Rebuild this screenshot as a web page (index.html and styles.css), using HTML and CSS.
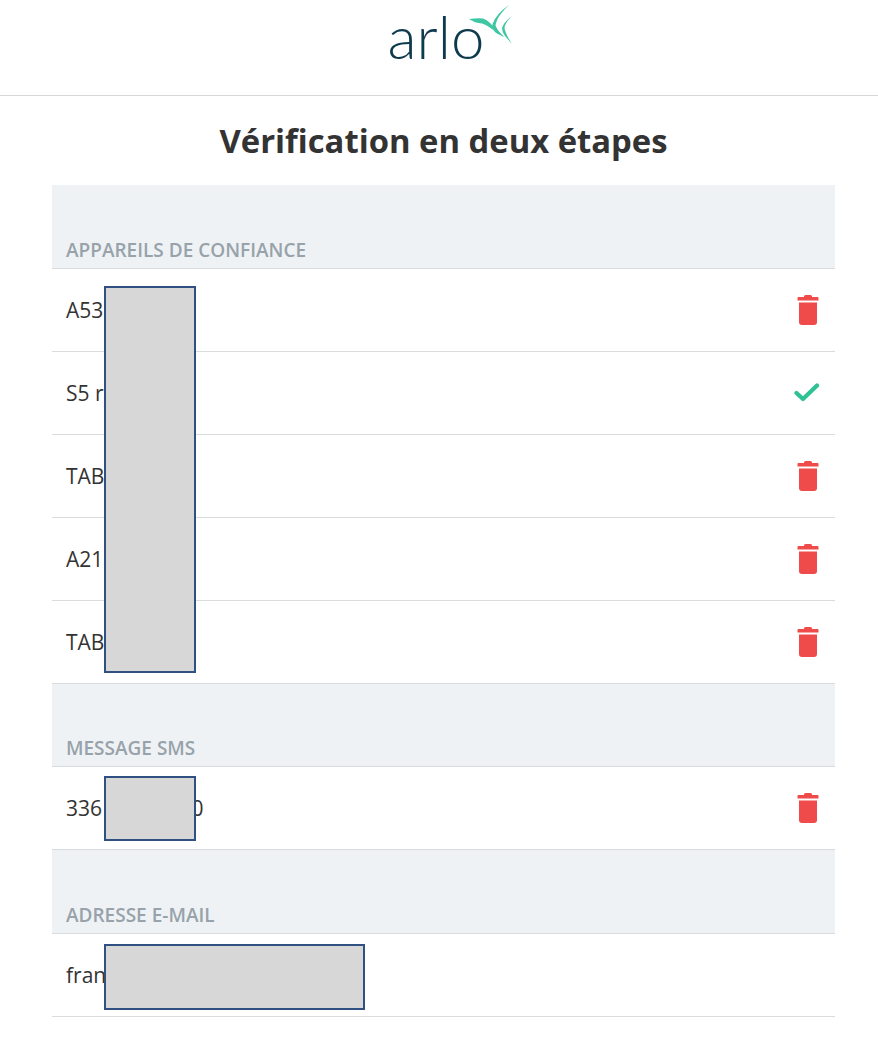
FILE: index.html
```html
<!DOCTYPE html>
<html lang="fr">
<head>
    <meta charset="UTF-8">
    <meta name="viewport" content="width=device-width, initial-scale=1.0">
    <title>Vérification en deux étapes</title>
    <link rel="stylesheet" href="styles.css">
</head>
<body>

    <header class="top-bar">
        <div class="logo">
            <span class="logo-text">arlo</span>
            <svg class="logo-bird" viewBox="468 4 46 42" width="46" height="42">
                <g fill="#3fc7a3">
                    <path d="M469 19 Q477 18 483 18.5 Q487 19.5 490 23 L504 37 L489 27 Q486 24.5 482 23.5 Q475 23 469 19 Z"/>
                    <path d="M509 5 Q496 14 492.5 24 Q491.5 30 497 33.5 L504 37 Q496 29 495.5 25 Q497 16 509 5 Z"/>
                    <path d="M512 16 Q504 22 502 28 Q502 32 505 36 L512 44 Q505 33 504.5 28 Q505 23 512 16 Z"/>
                </g>
            </svg>
        </div>
    </header>

    <h1 class="page-title">Vérification en deux étapes</h1>

    <main class="settings">
        <h2 class="section-head section-head-tall">APPAREILS DE CONFIANCE</h2>
        <div class="row">
            <span>A53</span>
            <svg class="trash" viewBox="0 0 22 32" width="22" height="32"><use href="#icon-trash"/></svg>
        </div>
        <div class="row">
            <span>S5 r</span>
            <svg class="check" viewBox="0 0 26 20" width="26" height="20"><path d="M2.5 11 L9 17 L23 3.5" fill="none" stroke="#2fc295" stroke-width="4.2" stroke-linecap="round" stroke-linejoin="round"/></svg>
        </div>
        <div class="row">
            <span>TAB</span>
            <svg class="trash" viewBox="0 0 22 32" width="22" height="32"><use href="#icon-trash"/></svg>
        </div>
        <div class="row">
            <span>A21</span>
            <svg class="trash" viewBox="0 0 22 32" width="22" height="32"><use href="#icon-trash"/></svg>
        </div>
        <div class="row">
            <span>TAB</span>
            <svg class="trash" viewBox="0 0 22 32" width="22" height="32"><use href="#icon-trash"/></svg>
        </div>

        <h2 class="section-head">MESSAGE SMS</h2>
        <div class="row">
            <span>336 00000000</span>
            <svg class="trash" viewBox="0 0 22 32" width="22" height="32"><use href="#icon-trash"/></svg>
        </div>

        <h2 class="section-head section-head-tall">ADRESSE E-MAIL</h2>
        <div class="row">
            <span>fran</span>
        </div>

        <!-- masques par-dessus les données -->
        <div class="mask mask-devices"></div>
        <div class="mask mask-sms"></div>
        <div class="mask mask-mail"></div>
    </main>

    <svg class="icon-defs" width="0" height="0">
        <symbol id="icon-trash" viewBox="0 0 22 32">
            <path d="M7 2.5 Q7 1 8.5 1 H13.5 Q15 1 15 2.5 V3 H20.5 Q21.5 3 21.5 4 V6.5 H0.5 V4 Q0.5 3 1.5 3 H7 Z" fill="#ef4b4b"/>
            <path d="M2 8.5 H20 V28 Q20 31 17 31 H5 Q2 31 2 28 Z" fill="#ef4b4b"/>
        </symbol>
    </svg>

</body>
</html>
```

FILE: styles.css
```css
body {
    margin: 0;
    background-color: #fff;
    font-family: "Open Sans", sans-serif;
    color: #333;
}

.top-bar {
    height: 95px;
    border-bottom: 1px solid #d5d7d9;
    display: flex;
    justify-content: center;
}

.logo {
    position: relative;
    width: 124px;
    height: 70px;
    margin-left: 25px;
}

.logo-text {
    position: absolute;
    left: -2px;
    top: 0;
    font-family: "Lato", sans-serif;
    font-weight: 300;
    font-size: 60px;
    line-height: 72px;
    color: #0e3a4e;
}

.logo-bird {
    position: absolute;
    left: 78px;
    top: 4px;
}

.page-title {
    margin: 0 43px 0 52px;
    height: 89px;
    line-height: 90px;
    text-align: center;
    font-size: 32.8px;
    font-weight: 700;
    color: #333;
}

.settings {
    position: relative;
    margin: 0 43px 0 52px;
}

.section-head {
    margin: 0;
    height: 83px;
    box-sizing: border-box;
    padding: 51px 14px 0;
    background-color: #eff2f5;
    border-bottom: 1px solid #d9dcdf;
    font-size: 19px;
    line-height: 26px;
    font-weight: 600;
    color: #97a2aa;
}

.section-head-tall {
    height: 84px;
    padding-top: 52px;
}

.row {
    height: 83px;
    box-sizing: border-box;
    padding: 0 14px;
    border-bottom: 1px solid #d9dcdf;
    display: flex;
    align-items: center;
    justify-content: space-between;
    font-size: 21px;
    color: #333;
}

.trash {
    margin-right: 2px;
}

.check {
    margin-right: 1px;
    margin-bottom: 3px;
}

.icon-defs {
    position: absolute;
}

.mask {
    position: absolute;
    left: 52px;
    box-sizing: border-box;
    width: 92px;
    background-color: #d7d7d7;
    border: 2px solid #2f5080;
}

.mask-devices {
    top: 101px;
    height: 387px;
}

.mask-sms {
    top: 591px;
    height: 65px;
}

.mask-mail {
    top: 759px;
    width: 261px;
    height: 66px;
}
```
